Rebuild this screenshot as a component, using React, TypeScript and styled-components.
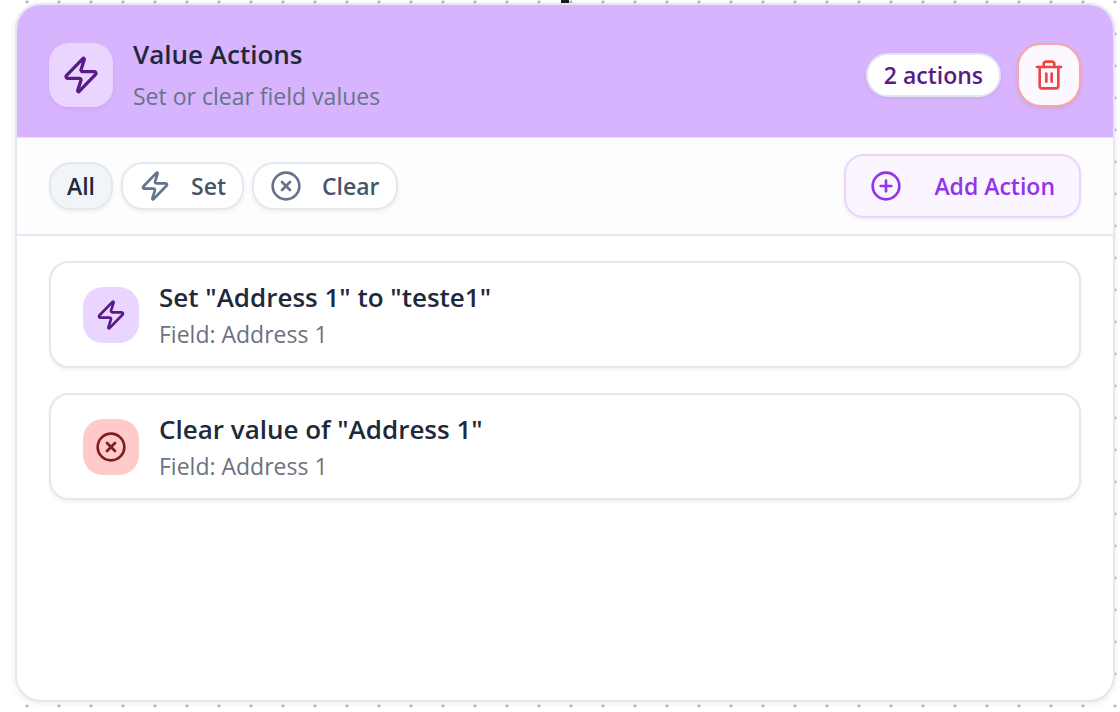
import React from "react";
import styled, { createGlobalStyle } from "styled-components";
import { CirclePlus, CircleX, Trash2, Zap } from "lucide-react";

const GlobalStyle = createGlobalStyle`
  *, *::before, *::after { box-sizing: border-box; }
  body {
    margin: 0;
    background: #fff;
    color: #1e293b;
    font-family: "Open Sans", "Noto Sans", sans-serif;
  }
  h2, h3, p, ul { margin: 0; padding: 0; }
  button { font-family: inherit; cursor: pointer; }
`;

const Canvas = styled.div`
  position: relative;
  display: flex;
  min-height: 100vh;
  padding: 3px 5px 10px 15px;
  background-image: radial-gradient(circle, #b8b8bc 1px, transparent 2px);
  background-size: 32px 32px;
  background-position: 11px -14px;
`;

const Connector = styled.span`
  position: absolute;
  top: 0;
  left: 561px;
  width: 8px;
  height: 3px;
  background: #1a1a2e;
`;

const Panel = styled.section`
  position: relative;
  flex: 1;
  min-width: 0;
  display: flex;
  flex-direction: column;
  overflow: hidden;
  background: #fff;
  border: 2px solid #e2e8f0;
  border-radius: 26px;
  box-shadow: 0 2px 6px rgba(15, 23, 42, 0.08);
`;

const Header = styled.header`
  display: flex;
  align-items: center;
  gap: 20px;
  height: 133px;
  padding: 8px 32px 0;
  background: #d8b4fe;
  border-bottom: 1px solid #e2e8f0;
`;

const IconTile = styled.span<{ $size: number; $bg: string; $color: string; $raised?: boolean }>`
  flex: none;
  display: flex;
  align-items: center;
  justify-content: center;
  width: ${(p) => p.$size}px;
  height: ${(p) => p.$size}px;
  border-radius: 20px;
  background: ${(p) => p.$bg};
  color: ${(p) => p.$color};
  box-shadow: ${(p) => (p.$raised ? "0 2px 4px rgba(15, 23, 42, 0.06)" : "none")};
`;

const Heading = styled.div`
  flex: 1;
  min-width: 0;
`;

const Title = styled.h2`
  font-size: 26px;
  line-height: 42px;
  font-weight: 600;
`;

const Subtitle = styled.p`
  font-size: 23px;
  line-height: 42px;
  color: #64748b;
`;

const HeaderTools = styled.div`
  display: flex;
  align-items: center;
  gap: 16px;
`;

const Count = styled.span`
  display: flex;
  align-items: center;
  height: 44px;
  padding: 0 16px;
  border: 2px solid #e2e8f0;
  border-radius: 22px;
  background: #fff;
  color: #581c87;
  font-size: 23px;
  font-weight: 600;
  box-shadow: 0 2px 4px rgba(15, 23, 42, 0.06);
`;

const DeleteButton = styled.button`
  display: flex;
  align-items: center;
  justify-content: center;
  width: 64px;
  height: 64px;
  padding: 0;
  border: 2px solid #fca5a5;
  border-radius: 24px;
  background: #fbf8ff;
  color: #ef4444;
  box-shadow: 0 2px 4px rgba(15, 23, 42, 0.08);
`;

const Toolbar = styled.div`
  display: flex;
  align-items: center;
  justify-content: space-between;
  height: 98px;
  padding: 0 32px;
  background: #fdfdfe;
  border-bottom: 2px solid #e2e8f0;
`;

const Filters = styled.div`
  display: flex;
  gap: 8px;
`;

const FilterButton = styled.button<{ $active?: boolean }>`
  display: flex;
  align-items: center;
  gap: 20px;
  height: 48px;
  padding: 0 16px;
  border: 2px solid #e2e8f0;
  border-radius: 22px;
  background: ${(p) => (p.$active ? "#f1f5f9" : "#fff")};
  color: ${(p) => (p.$active ? "#1e293b" : "#475569")};
  font-size: 23px;
  font-weight: 600;
  box-shadow: 0 2px 4px rgba(15, 23, 42, 0.06);

  svg { color: #64748b; }
`;

const AddButton = styled.button`
  display: flex;
  align-items: center;
  gap: 32px;
  height: 64px;
  padding: 0 24px;
  border: 2px solid #e9d5ff;
  border-radius: 20px;
  background: #faf5ff;
  color: #9333ea;
  font-size: 23px;
  font-weight: 600;
  box-shadow: 0 2px 4px rgba(15, 23, 42, 0.06);
`;

const ActionList = styled.ul`
  display: flex;
  flex-direction: column;
  gap: 25px;
  padding: 25px 32px;
  list-style: none;
`;

const ActionCard = styled.li`
  display: flex;
  align-items: center;
  gap: 20px;
  height: 107px;
  padding: 0 32px;
  border: 2px solid #e2e8f0;
  border-radius: 20px;
  background: #fff;
  box-shadow: 0 2px 4px rgba(15, 23, 42, 0.06);
`;

const ActionTitle = styled.h3`
  font-size: 26px;
  line-height: 38px;
  font-weight: 600;
`;

const ActionField = styled.p`
  font-size: 23px;
  line-height: 36px;
  color: #6b7280;
`;

const actions = [
  { icon: Zap, bg: "#e9d5ff", color: "#581c87", title: 'Set "Address 1" to "teste1"', field: "Address 1" },
  { icon: CircleX, bg: "#fecaca", color: "#7f1d1d", title: 'Clear value of "Address 1"', field: "Address 1" },
];

export default function App() {
  return (
    <>
      <GlobalStyle />
      <Canvas>
        <Connector />
        <Panel>
          <Header>
            <IconTile $size={64} $bg="#e9d5ff" $color="#581c87" $raised>
              <Zap size={40} />
            </IconTile>
            <Heading>
              <Title>Value Actions</Title>
              <Subtitle>Set or clear field values</Subtitle>
            </Heading>
            <HeaderTools>
              <Count>2 actions</Count>
              <DeleteButton type="button" aria-label="Delete">
                <Trash2 size={32} />
              </DeleteButton>
            </HeaderTools>
          </Header>
          <Toolbar>
            <Filters>
              <FilterButton type="button" $active>All</FilterButton>
              <FilterButton type="button"><Zap size={32} />Set</FilterButton>
              <FilterButton type="button"><CircleX size={32} />Clear</FilterButton>
            </Filters>
            <AddButton type="button"><CirclePlus size={32} />Add Action</AddButton>
          </Toolbar>
          <ActionList>
            {actions.map(({ icon: Icon, bg, color, title, field }) => (
              <ActionCard key={title}>
                <IconTile $size={56} $bg={bg} $color={color}>
                  <Icon size={32} />
                </IconTile>
                <div>
                  <ActionTitle>{title}</ActionTitle>
                  <ActionField>Field: {field}</ActionField>
                </div>
              </ActionCard>
            ))}
          </ActionList>
        </Panel>
      </Canvas>
    </>
  );
}
